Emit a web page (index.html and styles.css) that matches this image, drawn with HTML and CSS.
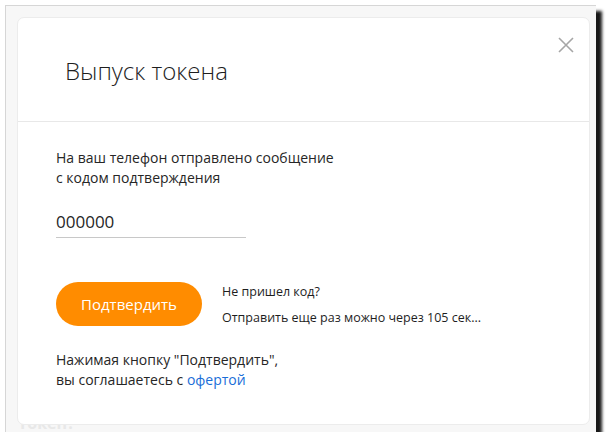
FILE: index.html
```html
<!DOCTYPE html>
<html lang="ru">
<head>
    <meta charset="UTF-8">
    <meta name="viewport" content="width=device-width, initial-scale=1.0">
    <title>Выпуск токена</title>
    <link rel="stylesheet" href="styles.css">
</head>
<body>
    <div class="window">
        <!-- Faded page behind the modal -->
        <div class="backdrop-text">Токен?</div>

        <div class="modal">
            <button class="modal-close" aria-label="Закрыть">
                <svg width="16" height="16" viewBox="0 0 16 16">
                    <path d="M1 1 L15 15 M15 1 L1 15" stroke="#a6a6a6" stroke-width="1.6" fill="none"/>
                </svg>
            </button>

            <div class="modal-header">
                <h2>Выпуск токена</h2>
            </div>

            <div class="modal-body">
                <p class="info">На ваш телефон отправлено сообщение<br>с кодом подтверждения</p>

                <input type="text" class="code-input" value="000000">

                <div class="actions">
                    <button class="btn-confirm">Подтвердить</button>
                    <div class="resend">
                        <div>Не пришел код?</div>
                        <div>Отправить еще раз можно через 105 сек...</div>
                    </div>
                </div>

                <p class="agreement">Нажимая кнопку "Подтвердить",<br>вы соглашаетесь с <a href="#">офертой</a></p>
            </div>
        </div>
    </div>
</body>
</html>
```

FILE: styles.css
```css
body {
    margin: 0;
    padding: 0;
    background-color: #ffffff;
    font-family: "Open Sans", Arial, sans-serif;
    color: #222;
}
.window {
    position: relative;
    margin: 5px 0 0 5px;
    width: 591px;
    height: 427px;
    box-sizing: border-box;
    padding: 11px 0 0 11px;
    background-color: #f7f7f7;
    border-top: 1px solid #d6d6d6;
    border-left: 1px solid #d6d6d6;
    box-shadow: 6px 6px 3px rgba(0, 0, 0, 0.9);
}
.backdrop-text {
    position: absolute;
    left: 12px;
    bottom: -2px;
    font-size: 16px;
    font-weight: 700;
    color: #e8e8e8;
}
.modal {
    position: relative;
    width: 573px;
    height: 408px;
    box-sizing: border-box;
    background-color: white;
    border: 1px solid #ececec;
    border-radius: 7px;
}
.modal-close {
    position: absolute;
    top: 19px;
    right: 15px;
    background: none;
    border: none;
    padding: 0;
    cursor: pointer;
    line-height: 0;
}
.modal-header {
    height: 104px;
    box-sizing: border-box;
    padding: 37px 0 0 47px;
    border-bottom: 1px solid #e8e8e8;
}
.modal-header h2 {
    margin: 0;
    font-size: 24px;
    font-weight: 300;
    color: #1e1e1e;
    line-height: 32px;
}
.modal-body {
    padding: 26px 38px 0;
}
.info {
    margin: 0;
    font-size: 14px;
    line-height: 20px;
    color: #262626;
}
.code-input {
    display: block;
    margin-top: 22px;
    width: 190px;
    padding: 0 0 4px;
    border: none;
    border-bottom: 1px solid #c8c8c8;
    font-family: "Open Sans", Arial, sans-serif;
    font-size: 17px;
    color: #262626;
    outline: none;
}
.actions {
    display: flex;
    align-items: center;
    gap: 20px;
    margin-top: 44px;
}
.btn-confirm {
    width: 146px;
    height: 44px;
    background-color: #ff8c00;
    color: white;
    border: none;
    border-radius: 22px;
    font-family: "Open Sans", Arial, sans-serif;
    font-size: 15px;
    cursor: pointer;
}
.resend {
    display: flex;
    flex-direction: column;
    gap: 9px;
    font-size: 12.5px;
    color: #1e1e1e;
}
.agreement {
    margin: 24px 0 0;
    font-size: 14px;
    line-height: 20px;
    color: #262626;
}
.agreement a {
    color: #1a6ed8;
    text-decoration: none;
}
```
